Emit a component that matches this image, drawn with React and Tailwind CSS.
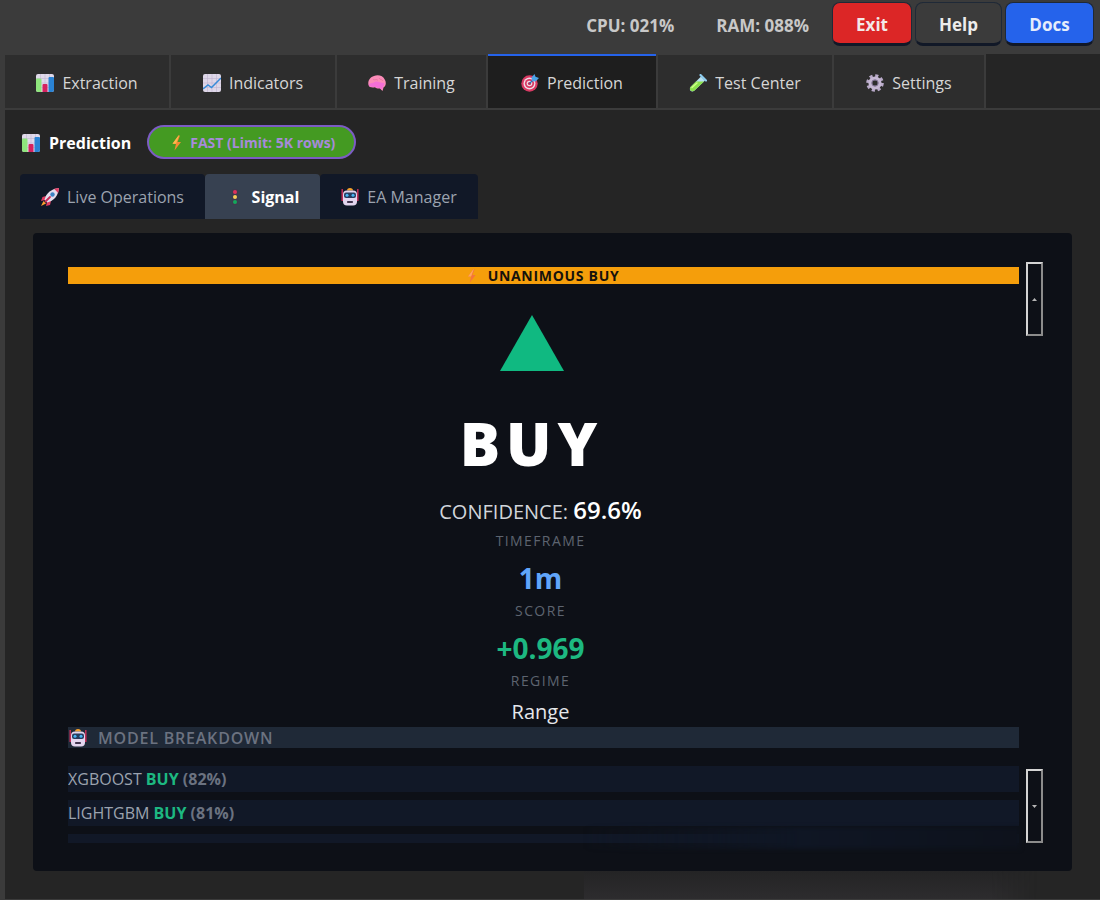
import { useState } from 'react';

const Svg = ({ className = 'size-[18px]', children }) => (
  <svg viewBox="0 0 18 18" className={`shrink-0 ${className}`} aria-hidden="true">{children}</svg>
);

const ChartBar = () => (
  <Svg>
    <rect x="0" y="0" width="18" height="18" rx="2" fill="#e0d9ea" />
    <path d="M4.5 0v18M9 0v18M13.5 0v18M0 4.5h18M0 9h18M0 13.5h18" stroke="#c3b6d3" strokeWidth=".6" />
    <path d="M0 5.500a1 1 0 0 1 1-1h3.500a1 1 0 0 1 1 1V18H2a2 2 0 0 1-2-2z" fill="#8ee57c" />
    <path d="M6.500 11a1 1 0 0 1 1-1h3a1 1 0 0 1 1 1v7h-5z" fill="#d5225f" />
    <path d="M12.500 4a1 1 0 0 1 1-1H17a1 1 0 0 1 1 1v12a2 2 0 0 1-2 2h-3.500z" fill="#2a83d4" />
  </Svg>
);

const ChartLine = () => (
  <Svg>
    <rect width="18" height="18" rx="2" fill="#ded7e8" />
    <path d="M4.500 0v18M9 0v18M13.500 0v18M0 4.500h18M0 9h18M0 13.500h18" stroke="#c0b3d0" strokeWidth=".6" />
    <path d="M0 15l5-4 3.500 2.500L18 4" fill="none" stroke="#378bd8" strokeWidth="1.500" />
  </Svg>
);

const Brain = () => (
  <Svg>
    <path d="M.5 11C-.5 7 2 3 6 2c4-1.500 9-.5 11 4 1.500 3 .8 6-1.500 7.500l-1 3.500-2.500-2.500c-2 .3-4-.2-5-1.200-3 .5-6 .2-6.500-2.300z" fill="#fb8cb8" />
    <path d="M.8 10.500c2-2 4-1 6-2.500s5 1 9.500 1c0 2-.8 3.500-1.800 4.500l-.5 2.500-2-2c-2 .3-4-.2-5-1.200-3 .5-5.700.2-6.200-2.300z" fill="#f46fd6" />
    <path d="M5 5.500c2 1 4-1 5 1M11 4c1 2 3 1 4 3" fill="none" stroke="#e8709f" strokeWidth=".8" />
  </Svg>
);

const Target = () => (
  <Svg>
    <circle cx="8.500" cy="9.500" r="8.200" fill="#d93a63" />
    <circle cx="8.500" cy="9.500" r="6" fill="#f0dce6" />
    <circle cx="8.500" cy="9.500" r="4.600" fill="#d93a63" />
    <circle cx="8.500" cy="9.500" r="2.800" fill="#f0dce6" />
    <circle cx="8.500" cy="9.500" r="1.600" fill="#c92c55" />
    <path d="M8.500 9.500L14 4" stroke="#2670b8" strokeWidth="1.300" />
    <path d="M10.500 3.500L13.500 0l1 2.700L18 4l-3.500 3.500-3.500-.5z" fill="#4ba3e8" />
  </Svg>
);

const Tube = () => (
  <Svg>
    <path d="M12 2.500l4 4L5.500 16.500c-3 2.500-6-.5-4-3.500z" fill="#b9e2f2" />
    <path d="M7 7.500l8 0-9.500 9C3 18.500-.5 16 1.500 13z" fill="#8be04b" />
    <path d="M3 13.500l5-4.500" stroke="#d0ff8a" strokeWidth="1.500" strokeLinecap="round" />
    <path d="M11.500 1l5.500 5.500" stroke="#8ecdf0" strokeWidth="2.200" strokeLinecap="round" />
  </Svg>
);

const Gear = () => (
  <Svg>
    <circle cx="9" cy="9" r="7.300" fill="none" stroke="#b9aac9" strokeWidth="3" strokeDasharray="3.100 2.633" />
    <circle cx="9" cy="9" r="4.700" fill="none" stroke="#c6b8d4" strokeWidth="3.800" />
    <circle cx="9" cy="9" r="3.200" fill="none" stroke="#77698a" strokeWidth="1" />
  </Svg>
);

const Bolt = () => (
  <Svg>
    <path d="M10.500 1.500L4.500 9.700h3.500L6.500 16.500 13 8H9.500l2.500-6.500z" fill="#f58b34" />
    <path d="M10.500 1.500L4.500 9.700h3.500l3-8.200z" fill="#ffb84d" />
  </Svg>
);

const BoltDim = () => (
  <Svg className="size-4">
    <path d="M10.500 1.500L4.500 9.700h3.500L6.500 16.500 13 8H9.500l2.500-6.500z" fill="#f4753a" />
    <path d="M10.500 1.500L4.500 9.700h3.500l3-8.200z" fill="#ffa65c" />
  </Svg>
);

const Rocket = () => (
  <Svg>
    <path d="M5 8L1.500 9 0 13l4-1zM10 13l-1 4-4 1 1-4z" fill="#e23b62" />
    <path d="M2.500 13L0 18l5-2.500z" fill="#ffa02e" />
    <path d="M3.500 12C5 5 10 1 18 0c-1 8-5 13-12 14.500z" fill="#e4dced" />
    <path d="M13 .8L18 0l-.8 5z" fill="#e23b62" />
    <circle cx="11.500" cy="6.500" r="2.200" fill="#3c83c4" />
    <path d="M4.500 13.500L9 9" stroke="#c62d58" strokeWidth="1.800" strokeLinecap="round" />
  </Svg>
);

const Lights = () => (
  <Svg>
    <rect x="6.500" y="1" width="5" height="16" rx="1.500" fill="#42384d" />
    <circle cx="9" cy="4" r="2" fill="#e0315b" />
    <circle cx="9" cy="9" r="2" fill="#f7cd57" />
    <circle cx="9" cy="14" r="2" fill="#13a85c" />
  </Svg>
);

const Robot = () => (
  <Svg>
    <path d="M1.200 1v12M16.800 1v12" stroke="#cf2f5b" strokeWidth="1.400" />
    <path d="M6 2.500a3 2.500 0 0 1 6 0z" fill="#f5a12c" />
    <rect x="2" y="2.500" width="14" height="15" rx="4" fill="#e3d5ee" />
    <rect x="3" y="4.500" width="12" height="5.500" rx="2" fill="#263c5e" />
    <circle cx="6" cy="7.200" r="1.500" fill="#4ab4f2" />
    <circle cx="12" cy="7.200" r="1.500" fill="#4ab4f2" />
    <rect x="6" y="13" width="6" height="2" rx=".8" fill="#41344e" />
  </Svg>
);

const TABS = [
  { id: 'extraction', label: 'Extraction', Icon: ChartBar, width: 'w-[164px]' },
  { id: 'indicators', label: 'Indicators', Icon: ChartLine, width: 'w-[164px]' },
  { id: 'training', label: 'Training', Icon: Brain, width: 'w-[149px]' },
  { id: 'prediction', label: 'Prediction', Icon: Target, width: 'w-[168px]' },
  { id: 'test', label: 'Test Center', Icon: Tube, width: 'w-[174px]' },
  { id: 'settings', label: 'Settings', Icon: Gear, width: 'w-[150px]' },
];

const SUB_TABS = [
  { id: 'live', label: 'Live Operations', Icon: Rocket, width: 'w-[185px]' },
  { id: 'signal', label: 'Signal', Icon: Lights, width: 'w-[115px]' },
  { id: 'ea', label: 'EA Manager', Icon: Robot, width: 'w-[158px]' },
];

const MODELS = [
  { name: 'XGBOOST', signal: 'BUY', pct: 82 },
  { name: 'LIGHTGBM', signal: 'BUY', pct: 81 },
];

const STATS = [
  { label: 'TIMEFRAME', value: '1m', style: 'text-[28px] leading-[42px] font-bold text-[#60a5fa]' },
  { label: 'SCORE', value: '+0.969', style: 'text-[28px] leading-[42px] font-bold text-[#1db881]' },
  { label: 'REGIME', value: 'Range', style: 'text-xl leading-[30px] font-medium text-[#e5e7eb]' },
];

function ScrollButton({ label, points }) {
  return (
    <button aria-label={label} className="flex h-[74px] w-[17px] items-center justify-center border-2 border-t-[#d4d4d4] border-r-[#8c8c8c] border-b-[#8c8c8c] border-l-[#d4d4d4]">
      <svg viewBox="0 0 5 3" className="h-[3px] w-[5px]" aria-hidden="true"><polygon points={points} fill="#b5b5b5" /></svg>
    </button>
  );
}

function SignalPanel() {
  return (
    <div className="relative mt-[14px] mr-7 mb-7 ml-7 flex min-h-0 flex-1 gap-[7px] rounded bg-[#0d1017] pt-[29px] pr-[29px] pb-7 pl-[35px]">
      <div className="min-w-0 flex-1 overflow-hidden pt-[5px]">
        <div className="flex h-[17px] items-center justify-center gap-2 bg-[#f59e0b] pr-1 text-sm leading-[17px] font-bold tracking-wider text-[#15120c]">
          <BoltDim />
          <span>UNANIMOUS BUY</span>
        </div>
        <div className="flex flex-col items-center pt-[31px] pr-6">
          <svg viewBox="0 0 64 56" className="h-14 w-16" aria-hidden="true"><polygon points="32,0 64,56 0,56" fill="#10b981" /></svg>
          <div className="mt-8 mb-[11px] font-['Noto_Sans','Open_Sans',sans-serif] text-[60px] leading-[80px] font-black tracking-widest text-white">BUY</div>
        </div>
        <div className="flex flex-col items-center pr-[6px]">
          <div className="mb-px text-xl leading-[33px] text-[#d1d5db]">
            CONFIDENCE: <span className="text-2xl leading-8 font-semibold text-white">69.6%</span>
          </div>
          {STATS.map(s => (
            <div key={s.label} className="flex flex-col items-center gap-1">
              <div className="text-sm leading-6 tracking-widest text-[#5d6470]">{s.label}</div>
              <div className={s.style}>{s.value}</div>
            </div>
          ))}
        </div>
        <h2 className="flex h-[21px] items-center gap-[11px] bg-[#1f2937] pl-px text-base font-semibold tracking-wider text-[#6b7280]">
          <Robot />MODEL BREAKDOWN
        </h2>
        <ul className="mt-[18px] flex flex-col gap-2 text-base leading-[26px]">
          {MODELS.map(m => (
            <li key={m.name} className="bg-[#111827] text-[#9ca3af]">
              {m.name} <span className="font-bold text-[#1db881]">{m.signal}</span> <span className="font-bold text-[#6b7280]">({m.pct}%)</span>
            </li>
          ))}
          <li className="h-[26px] bg-[#111827]" />
        </ul>
      </div>
      <div className="flex flex-col justify-between">
        <ScrollButton label="Scroll up" points="2.5,0 5,3 0,3" />
        <ScrollButton label="Scroll down" points="0,0 5,0 2.5,3" />
      </div>
      {/* soft haze along the bottom edge */}
      <div aria-hidden="true" className="pointer-events-none absolute right-[52px] bottom-[22px] left-[53%] h-[22px] bg-linear-to-r from-transparent via-[#0f1624] to-[#0e121c] blur-[2px]" />
      <div aria-hidden="true" className="pointer-events-none absolute right-[35px] -bottom-7 left-[53%] h-7 bg-linear-to-b from-[#242425] to-[#2d2c2e] mask-r-from-90%" />
    </div>
  );
}

export default function App() {
  const [tab, setTab] = useState('prediction');
  const [sub, setSub] = useState('signal');

  return (
    <div className="flex h-screen flex-col overflow-hidden bg-[#3b3b3b] font-['Open_Sans','Noto_Sans',sans-serif] text-base text-[#d6d6d6]">
      <header className="flex h-[54px] items-start justify-end gap-[3px] pt-[2px] pr-[6px] font-bold">
        <div className="mr-5 flex h-12 items-center gap-[42px] text-[17px] text-[#c8c8c8]">
          <span>CPU: 021%</span>
          <span>RAM: 088%</span>
        </div>
        <button className="h-11 w-20 rounded-lg border border-b-[3px] border-[#1f2937] border-b-[#111827] bg-[#dc2626] pt-1 text-[17px] text-[#f3e8e8]">Exit</button>
        <button className="h-11 w-[87px] rounded-lg border border-b-[3px] border-[#1f2937] border-b-[#111827] bg-[#3b3b3b] pt-1 text-[17px] text-[#ececec]">Help</button>
        <button className="h-11 w-[89px] rounded-lg border border-b-[3px] border-[#1f2937] border-b-[#111827] bg-[#2563eb] pt-1 text-[17px] text-[#e6edfb]">Docs</button>
      </header>

      <nav className="ml-[5px] flex h-14 gap-[2px] border-b-2 border-[#3b3b3b]">
        {TABS.map(({ id, label, Icon, width }) => (
          <button key={id} onClick={() => setTab(id)}
            className={`flex shrink-0 items-center justify-center gap-2 pt-[2px] ${width} ${tab === id ? 'border-t-2 border-[#2563eb] bg-[#1e1e1e]' : 'border-t border-[#3b3b3b] bg-[#2d2d2d]'}`}>
            <Icon />{label}
          </button>
        ))}
        <div className="flex-1 bg-[#252525]" />
      </nav>

      <main className="mb-px ml-[5px] flex min-h-0 flex-1 flex-col bg-[#252525] pt-[15px]">
        <div className="flex items-center gap-4 pl-[17px]">
          <h1 className="flex items-center gap-[9px] pt-px text-base font-bold text-white"><ChartBar />Prediction</h1>
          <div className="flex h-[34px] items-center gap-1 rounded-full border-2 border-[#7c5cc4] bg-[#449a22] px-[19px] pt-px text-sm font-bold text-[#a78bda]">
            <Bolt />FAST (Limit: 5K rows)
          </div>
        </div>
        <div className="mt-[15px] flex h-[45px] pl-[15px]">
          {SUB_TABS.map(({ id, label, Icon, width }) => (
            <button key={id} onClick={() => setSub(id)}
              className={`flex shrink-0 items-center justify-center gap-2 rounded-t pt-px ${width} ${sub === id ? 'bg-[#374151] font-bold text-white' : 'bg-[#111827] text-[#9ca3af]'}`}>
              <Icon />{label}
            </button>
          ))}
        </div>
        <SignalPanel />
      </main>
    </div>
  );
}
